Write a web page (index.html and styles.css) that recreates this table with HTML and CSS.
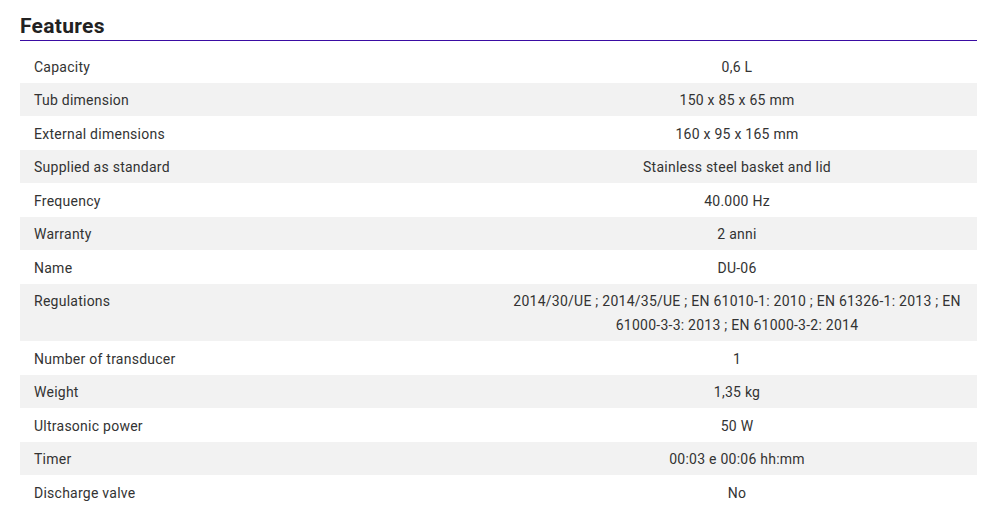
FILE: index.html
```html
<!DOCTYPE html>
<html>
<head>
<meta charset="utf-8">
<link rel="stylesheet" href="styles.css">
</head>
<body>
<section class="features">
  <h2 class="title">Features</h2>
  <table class="spec">
    <tbody>
      <tr><td class="k">Capacity</td><td class="v">0,6 L</td></tr>
      <tr><td class="k">Tub dimension</td><td class="v">150 x 85 x 65 mm</td></tr>
      <tr><td class="k">External dimensions</td><td class="v">160 x 95 x 165 mm</td></tr>
      <tr><td class="k">Supplied as standard</td><td class="v">Stainless steel basket and lid</td></tr>
      <tr><td class="k">Frequency</td><td class="v">40.000 Hz</td></tr>
      <tr><td class="k">Warranty</td><td class="v">2 anni</td></tr>
      <tr><td class="k">Name</td><td class="v">DU-06</td></tr>
      <tr><td class="k">Regulations</td><td class="v">2014/30/UE ; 2014/35/UE ; EN 61010-1: 2010 ; EN 61326-1: 2013 ; EN 61000-3-3: 2013 ; EN 61000-3-2: 2014</td></tr>
      <tr><td class="k">Number of transducer</td><td class="v">1</td></tr>
      <tr><td class="k">Weight</td><td class="v">1,35 kg</td></tr>
      <tr><td class="k">Ultrasonic power</td><td class="v">50 W</td></tr>
      <tr><td class="k">Timer</td><td class="v">00:03 e 00:06 hh:mm</td></tr>
      <tr><td class="k">Discharge valve</td><td class="v">No</td></tr>
    </tbody>
  </table>
</section>
</body>
</html>
```

FILE: styles.css
```css
html, body {
  margin: 0;
  padding: 0;
  background: #fff;
}
body {
  font-family: "Roboto", "Liberation Sans", sans-serif;
  color: #333;
}
.features {
  padding: 14px 23px 0 20px;
}
.title {
  margin: 0;
  font-size: 21px;
  font-weight: 700;
  line-height: 25px;
  letter-spacing: 0.3px;
  color: #222;
  padding-bottom: 1px;
  border-bottom: 1px solid #3a0ca3;
}
.spec {
  width: 100%;
  border-collapse: collapse;
  margin-top: 8px;
  font-size: 14px;
  letter-spacing: 0.25px;
}
.spec td {
  padding: 5.5px 14px 4px;
  line-height: 24px;
  vertical-align: top;
}
.spec .k {
  width: 449px;
  text-align: left;
  color: #333;
}
.spec .v {
  text-align: center;
  color: #333;
}
.spec tr:nth-child(even) td {
  background: #f2f2f2;
}
```
